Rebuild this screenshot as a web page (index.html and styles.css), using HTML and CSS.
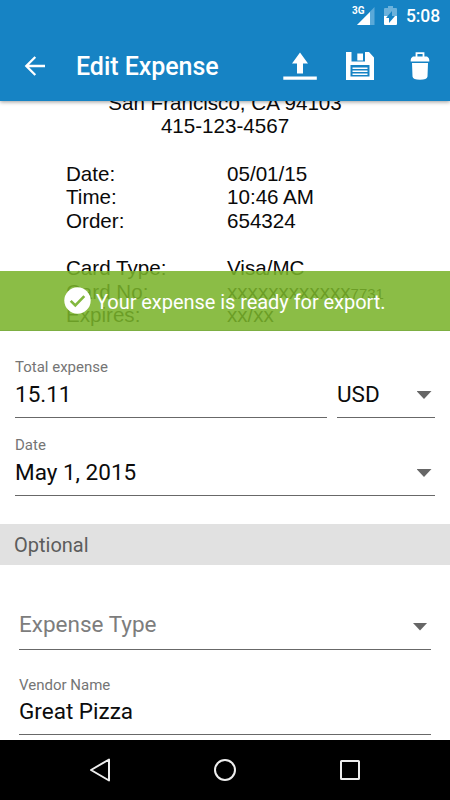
FILE: index.html
```html
<!DOCTYPE html>
<html lang="en">
<head>
<meta charset="utf-8">
<title>Edit Expense</title>
<link rel="stylesheet" href="styles.css">
</head>
<body>
<div class="screen">
  <header class="header">
    <div class="status">
      <svg class="signal" width="24" height="20" viewBox="0 0 24 20"><path d="M21.500 1V19H4Z" fill="#5aa9d8"/><path d="M17 6V19H4Z" fill="#fff"/></svg>
      <span class="network">3G</span>
      <svg class="battery" width="13" height="20" viewBox="0 0 13 20"><path d="M4 0h5v2h3q1 0 1 1v7H0V3q0-1 1-1h3z" fill="#6bb2dc"/><path d="M0 10h13v8q0 1-1 1H1q-1 0-1-1z" fill="#fff"/><path d="M8 5v5h3l-6 7v-5H2z" fill="#1683c4"/></svg>
      <span class="clock">5:08</span>
    </div>
    <div class="toolbar">
      <svg class="back" width="22" height="22" viewBox="0 0 22 22" fill="none" stroke="#fff" stroke-width="2.300"><path d="M21 11H3M11.300 2 2.300 11l9 9"/></svg>
      <h1 class="title">Edit Expense</h1>
      <svg class="upload" width="34" height="28" viewBox="0 0 34 28" fill="#fff"><path d="M17 0.500 25 11.500h-5V21.500h-6v-10H9zM0.300 24.500h33.500v3.300H.3z"/></svg>
      <svg class="save" width="28" height="28" viewBox="0 0 28 28"><path d="M0 0h5.500v9.500h13.500V0h4L28 5.500V28H0z" fill="#fff"/><path d="M11.300 1.500h5.700v7h-5.700z" fill="#fff"/><path d="M4.500 13h19v11.500h-19z" fill="#1683c4"/><path d="M6.500 15.500h15v1.500h-15zM6.500 18.500h15v1.500h-15zM6.500 21.500h15v1.500h-15z" fill="#fff"/></svg>
      <svg class="trash" width="20" height="28" viewBox="0 0 20 28"><path d="M6.500 5V1.200h7V5" fill="none" stroke="#fff" stroke-width="1.800"/><path d="M3 4.500h14q2.300 1 2.300 3.500v1.500H.7V8Q.7 5.500 3 4.500zM2 11h16l-.5 13.500Q17 27.800 10 27.800t-7.500-3.300z" fill="#fff"/></svg>
    </div>
  </header>
  <section class="preview">
    <div class="receipt">
      <p class="center">San Francisco, CA 94103</p>
      <p class="center">415-123-4567</p>
      <dl class="details">
        <dt>Date:</dt><dd>05/01/15</dd>
        <dt>Time:</dt><dd>10:46 AM</dd>
        <dt>Order:</dt><dd>654324</dd>
      </dl>
      <dl class="details">
        <dt>Card Type:</dt><dd>Visa/MC</dd>
        <dt>Card No:</dt><dd>xxxxxxxxxxxx<span class="digits">7731</span></dd>
        <dt>Expires:</dt><dd>xx/xx</dd>
      </dl>
    </div>
    <div class="banner">
      <svg width="27" height="27" viewBox="0 0 27 27"><circle cx="13.500" cy="13.500" r="13.200" fill="#fff"/><path d="m6.700 13.800 4.600 4.600 9-9.300" fill="none" stroke="#83b83f" stroke-width="2.600"/></svg>
      <span class="message">Your expense is ready for export.</span>
    </div>
  </section>
  <main class="form">
    <div class="row">
      <div class="field amount">
        <div class="label">Total expense</div>
        <div class="value"><span>15.11</span></div>
      </div>
      <div class="field currency">
        <div class="value"><span>USD</span><i class="caret"></i></div>
      </div>
    </div>
    <div class="field date">
      <div class="label">Date</div>
      <div class="value"><span>May 1, 2015</span><i class="caret"></i></div>
    </div>
    <h2 class="section">Optional</h2>
    <div class="field type">
      <div class="value"><span>Expense Type</span><i class="caret"></i></div>
    </div>
    <div class="field vendor">
      <div class="label">Vendor Name</div>
      <div class="value"><span>Great Pizza</span></div>
    </div>
  </main>
  <nav class="nav">
    <svg width="24" height="26" viewBox="0 0 24 26"><path d="M3 13 21 2.500v21z"/></svg>
    <svg width="24" height="26" viewBox="0 0 24 26"><circle cx="12" cy="13" r="10"/></svg>
    <svg width="24" height="26" viewBox="0 0 24 26"><rect x="3" y="4" width="18" height="18" rx=".5"/></svg>
  </nav>
</div>
</body>
</html>
```
FILE: styles.css
```css
* { box-sizing: border-box; margin: 0; padding: 0; }
body { background: #fff; font-family: Roboto, sans-serif; }
.screen { width: 450px; height: 800px; display: flex; flex-direction: column; overflow: hidden; }
svg { display: block; flex: none; }

.header { position: relative; z-index: 1; height: 101px; flex: none; background: #1683c4; color: #fff; box-shadow: 0 1px 4px rgba(0, 0, 0, .4); }
.status { position: relative; height: 32px; display: flex; align-items: center; padding: 0 10px 0 352px; }
.network { position: absolute; left: 352px; top: 5px; font-size: 10px; line-height: 12px; font-weight: 700; }
.signal { margin: -1px 0 0 1px; }
.battery { margin: 0 0 0 7px; }
.clock { margin-left: 9px; font-size: 17.5px; font-weight: 500; line-height: 32px; letter-spacing: -.1px; white-space: nowrap; }
.toolbar { height: 69px; display: flex; align-items: center; padding: 0 20px 1px 24px; }
.title { margin: 2px 0 0 30px; flex: 1; font-size: 25px; line-height: 30px; font-weight: 500; letter-spacing: -.05px; white-space: nowrap; }
.upload { margin-right: 29px; }
.save { margin-right: 36px; }

.preview { position: relative; height: 230px; flex: none; overflow: hidden; }
.receipt { margin-top: -10.2px; font: 20.6px/23.6px "Liberation Sans", Arial, sans-serif; color: #0a0a0a; }
.center { text-align: center; }
.details { display: grid; grid-template-columns: 161px 1fr; padding-left: 66px; margin-top: 23.6px; }
.details dd { white-space: nowrap; }
.digits { font-size: 15px; line-height: 1; }
.banner { position: absolute; left: 0; right: 0; bottom: 0; height: 60px; display: flex; align-items: center; gap: 5px; padding-left: 64px; background: rgba(122, 179, 42, .87); border-bottom: 1px solid #7daf42; color: #fff; }
.message { font-size: 20px; line-height: 26px; letter-spacing: -.05px; padding-top: 2px; white-space: nowrap; }

.form { height: 409px; overflow: hidden; padding-top: 27px; }
.row { display: flex; align-items: flex-end; gap: 10px; padding: 0 15px; margin-bottom: 18px; }
.field { border-bottom: 1px solid #686868; padding-bottom: 10px; }
.amount { flex: 1; }
.currency { width: 98px; }
.date { margin: 0 15px 28px; }
.label { font-size: 15px; line-height: 18px; color: #757575; margin-bottom: 5px; }
.value { display: flex; align-items: center; justify-content: space-between; font-size: 22.5px; line-height: 26px; color: #0c0c0c; }
.caret { width: 15px; height: 8px; margin-right: 3.5px; margin-top: 2px; background: #666; clip-path: polygon(0 0, 100% 0, 50% 100%); }
.section { height: 41px; padding: 1px 0 0 14px; background: #e1e1e1; color: #5c5c5c; font-size: 20px; line-height: 41px; font-weight: 400; }
.type { margin: 46px 19px 0; padding-bottom: 12px; }
.type .value span { color: #7d7d7d; }
.type .caret { margin-top: 5px; }
.vendor { margin: 26px 19px 0; }
.vendor .label { margin-bottom: 4px; }

.nav { flex: 1; background: #000; display: flex; align-items: center; justify-content: center; gap: 101px; }
.nav svg { fill: none; stroke: #eee; stroke-width: 2; stroke-linejoin: round; }
```
